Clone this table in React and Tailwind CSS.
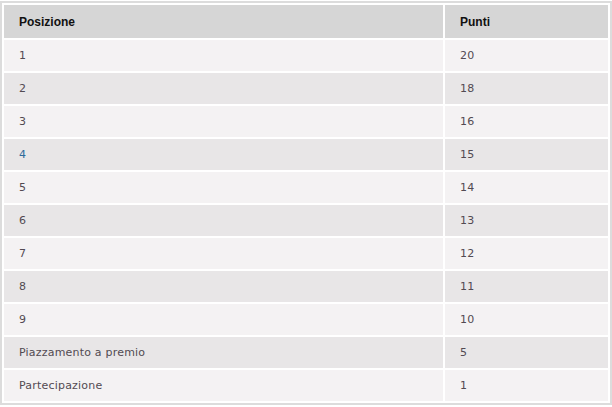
const ROWS = [
  ['1', '20'],
  ['2', '18'],
  ['3', '16'],
  ['4', '15', true],
  ['5', '14'],
  ['6', '13'],
  ['7', '12'],
  ['8', '11'],
  ['9', '10'],
  ['Piazzamento a premio', '5'],
  ['Partecipazione', '1'],
]

export default function App() {
  return (
    <div className="w-[612px] h-[407px] bg-white pt-[1px]">
      <div className="border-2 border-[#dcdcdc] p-[2px] bg-white">
        <div className="grid grid-cols-[439px_163px] gap-[2px]">
          <div className="h-[33px] bg-[#d6d6d6] flex items-center pl-[15px] text-[12px] font-bold text-[#111] font-['Liberation_Sans',Arial,sans-serif]">
            Posizione
          </div>
          <div className="h-[33px] bg-[#d6d6d6] flex items-center pl-[15px] text-[12px] font-bold text-[#111] font-['Liberation_Sans',Arial,sans-serif]">
            Punti
          </div>
          {ROWS.map(([pos, pts, link], i) => {
            const bg = i % 2 === 0 ? 'bg-[#f4f2f3]' : 'bg-[#e8e6e7]'
            return [
              <div key={`a${i}`} className={`h-[31px] ${bg} flex items-center pl-[15px] pt-[2px] text-[11px] tracking-[0.2px] font-['DejaVu_Sans',Verdana,sans-serif] ${link ? 'text-[#2f6a9a]' : 'text-[#524a52]'}`}>
                {pos}
              </div>,
              <div key={`b${i}`} className={`h-[31px] ${bg} flex items-center pl-[15px] pt-[2px] text-[11px] tracking-[0.2px] text-[#524a52] font-['DejaVu_Sans',Verdana,sans-serif]`}>
                {pts}
              </div>,
            ]
          })}
        </div>
      </div>
    </div>
  )
}
